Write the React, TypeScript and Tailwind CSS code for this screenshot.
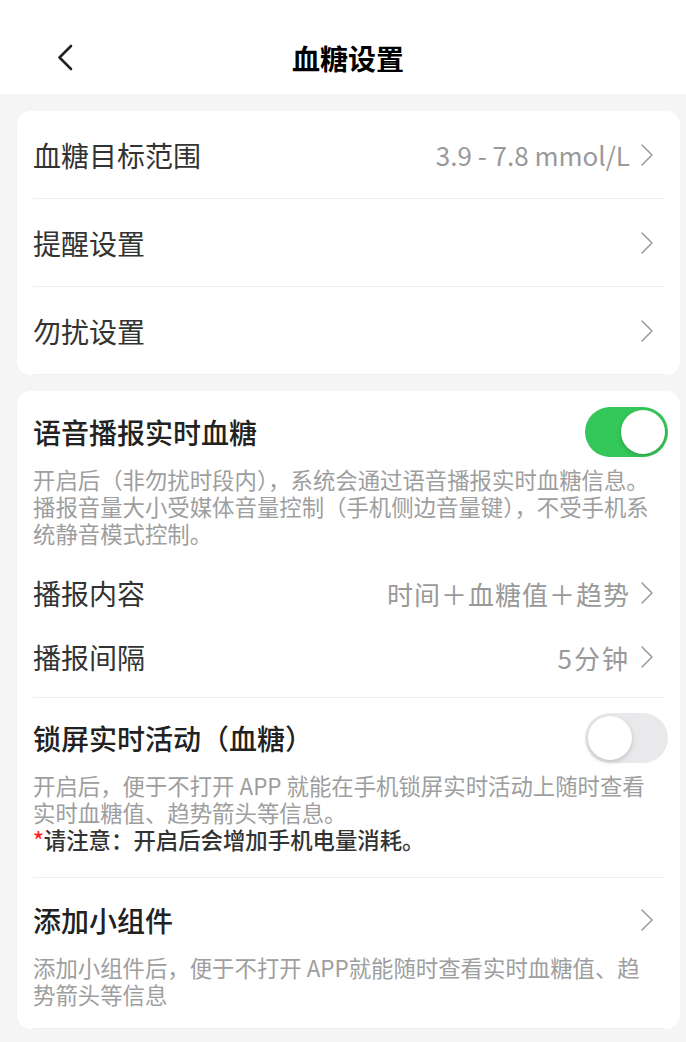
import React from "react";

function ChevronRight() {
  return (
    <svg width="14" height="24" viewBox="0 0 14 24" fill="none" className="mr-[10px] shrink-0">
      <path d="M2 2 L12 12 L2 22" stroke="#9a9a9a" strokeWidth="1.5" strokeLinecap="round" strokeLinejoin="round" />
    </svg>
  );
}

function Toggle({ on }: { on: boolean }) {
  return (
    <div
      className={`-mr-1 flex h-[50px] w-[83px] shrink-0 items-center rounded-full p-[3px] ${
        on ? "justify-end bg-[#34c759]" : "justify-start bg-[#e9e9eb]"
      }`}
    >
      <div className="h-[44px] w-[44px] rounded-full bg-white shadow-[0_2px_5px_rgba(0,0,0,0.18)]" />
    </div>
  );
}

function App() {
  const rangeRows = [
    { label: "血糖目标范围", value: "3.9 - 7.8 mmol/L" },
    { label: "提醒设置", value: "" },
    { label: "勿扰设置", value: "" },
  ];

  return (
    <div className="min-h-screen bg-[#f5f5f5] font-['Noto_Sans_CJK_SC','Noto_Sans',sans-serif]">
      {/* Header */}
      <div className="grid h-[94px] grid-cols-[90px_1fr_90px] items-center bg-white pl-[10px] pt-[22px]">
        <svg width="16" height="28" viewBox="0 0 16 28" fill="none" className="ml-[47px]">
          <path d="M14 2 L2.5 13.5 L14 25" stroke="#222" strokeWidth="2.6" strokeLinecap="round" strokeLinejoin="round" />
        </svg>
        <h1 className="text-center text-[28px] font-bold text-black">血糖设置</h1>
        <div />
      </div>

      {/* Card 1 */}
      <div className="ml-[17px] mr-[6px] mt-[17px] rounded-[14px] bg-white px-4">
        {rangeRows.map((row) => (
          <div
            key={row.label}
            className="flex h-[88px] items-center justify-between border-b border-[#eeeeee]"
          >
            <span className="text-[28px] text-[#333]">{row.label}</span>
            <div className="flex items-center gap-[10px] text-[26px] text-[#999]">
              {row.value && <span>{row.value}</span>}
              <ChevronRight />
            </div>
          </div>
        ))}
      </div>

      {/* Card 2 */}
      <div className="ml-[17px] mr-[6px] mt-4 rounded-[14px] bg-white px-4">
        {/* Voice broadcast */}
        <div className="border-b border-[#eeeeee] pb-2 pt-4">
          <div className="flex h-[50px] items-center justify-between">
            <span className="text-[28px] font-medium text-[#222]">语音播报实时血糖</span>
            <Toggle on />
          </div>
          <div className="mt-[9px] whitespace-nowrap text-[22.4px] leading-[27px] text-[#9e9e9e]">
            <div>开启后（非勿扰时段内），系统会通过语音播报实时血糖信息。</div>
            <div>播报音量大小受媒体音量控制（手机侧边音量键），不受手机系</div>
            <div>统静音模式控制。</div>
          </div>
          <div className="mt-[14px]">
            <div className="flex h-[64px] items-center justify-between">
              <span className="text-[28px] text-[#333]">播报内容</span>
              <div className="flex items-center gap-[10px] text-[26px] text-[#999]">
                <span className="tracking-[1px]">时间＋血糖值＋趋势</span>
                <ChevronRight />
              </div>
            </div>
            <div className="flex h-[64px] items-center justify-between">
              <span className="text-[28px] text-[#333]">播报间隔</span>
              <div className="flex items-center gap-[10px] text-[26px] text-[#999]">
                <span className="tracking-[2px]">5分钟</span>
                <ChevronRight />
              </div>
            </div>
          </div>
        </div>

        {/* Lock screen live activity */}
        <div className="border-b border-[#eeeeee] pb-6 pt-[15px]">
          <div className="flex h-[50px] items-center justify-between">
            <span className="text-[28px] font-medium text-[#222]">锁屏实时活动（血糖）</span>
            <Toggle on={false} />
          </div>
          <div className="mt-[9px] whitespace-nowrap text-[22.4px] leading-[27px] text-[#9e9e9e]">
            <div>开启后，便于不打开 APP 就能在手机锁屏实时活动上随时查看</div>
            <div>实时血糖值、趋势箭头等信息。</div>
            <div className="font-medium text-[#333]">
              <span className="text-[#ff2020]">*</span>请注意：开启后会增加手机电量消耗。
            </div>
          </div>
        </div>

        {/* Widget */}
        <div className="border-b border-[#eeeeee] pb-5 pt-[17px]">
          <div className="flex h-[50px] items-center justify-between">
            <span className="text-[28px] font-medium text-[#222]">添加小组件</span>
            <ChevronRight />
          </div>
          <div className="mt-[9px] whitespace-nowrap text-[22.4px] leading-[27px] text-[#9e9e9e]">
            <div>添加小组件后，便于不打开 APP就能随时查看实时血糖值、趋</div>
            <div>势箭头等信息</div>
          </div>
        </div>
      </div>
    </div>
  );
}

export default App;
